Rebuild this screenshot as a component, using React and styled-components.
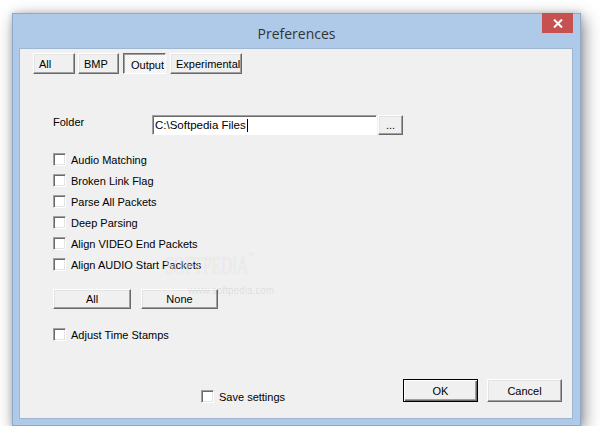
import React, { useState } from 'react'
import styled, { createGlobalStyle, css } from 'styled-components'

const GlobalStyle = createGlobalStyle`
  html, body {
    margin: 0;
    padding: 0;
    background: #ffffff;
  }
  body {
    font-family: "Liberation Sans", Arial, sans-serif;
    font-size: 11px;
    color: #000;
  }
`

const tabs = ['All', 'BMP', 'Output', 'Experimental']
const tabWidths = { All: 42, BMP: 41, Output: 43, Experimental: 72 }

const options = [
    'Audio Matching',
    'Broken Link Flag',
    'Parse All Packets',
    'Deep Parsing',
    'Align VIDEO End Packets',
    'Align AUDIO Start Packets',
]

const App = () => {
    const [tab, setTab] = useState('Output')
    const [checked, setChecked] = useState({})

    const toggle = name => setChecked({ ...checked, [name]: !checked[name] })

    return (
        <>
            <GlobalStyle />
            <Window>
                <TitleBar>
                    <span />
                    <Title>Preferences</Title>
                    <CloseButton aria-label="Close">
                        <svg width="10" height="9" viewBox="0 0 10 9">
                            <path d="M1 0.5 L9 8.5 M9 0.5 L1 8.5" stroke="#fff" strokeWidth="2" />
                        </svg>
                    </CloseButton>
                </TitleBar>
                <Client>
                    <TabRow>
                        {tabs.map(t => (
                            <Button
                                key={t}
                                $w={tabWidths[t]}
                                $h={21}
                                $left
                                $pressed={tab === t}
                                onClick={() => setTab(t)}
                            >
                                {t}
                            </Button>
                        ))}
                    </TabRow>

                    <FolderRow>
                        <FolderLabel>Folder</FolderLabel>
                        <TextBox>
                            C:\Softpedia Files<Caret />
                        </TextBox>
                        <Button $w={25} $h={20}>...</Button>
                    </FolderRow>

                    <CheckList>
                        {options.map(o => (
                            <CheckRow key={o} onClick={() => toggle(o)}>
                                <CheckBox $on={checked[o]} />
                                <span>{o}</span>
                            </CheckRow>
                        ))}
                    </CheckList>

                    <SelectRow>
                        <Button $w={78} $h={20}>All</Button>
                        <Button $w={77} $h={20}>None</Button>
                    </SelectRow>

                    <AdjustRow onClick={() => toggle('adjust')}>
                        <CheckBox $on={checked.adjust} />
                        <span>Adjust Time Stamps</span>
                    </AdjustRow>

                    <BottomBar>
                        <SaveRow onClick={() => toggle('save')}>
                            <CheckBox $on={checked.save} />
                            <span>Save settings</span>
                        </SaveRow>
                        <Button $w={75} $h={23} $default>OK</Button>
                        <Button $w={75} $h={23}>Cancel</Button>
                    </BottomBar>

                    <Watermark>
                        SOFTPEDIA<sup>™</sup>
                    </Watermark>
                    <WatermarkUrl>www.softpedia.com</WatermarkUrl>
                </Client>
            </Window>
        </>
    )
}

const Window = styled.div`
    margin: 13px 0 0 12px;
    width: 567px;
    height: 411px;
    border: 1px solid #8fa9c8;
    background: #aecae8;
    display: flex;
    flex-direction: column;
    box-shadow: 3px 5px 16px rgba(0, 0, 0, 0.45), 0 0 6px rgba(0, 0, 0, 0.15);
`

const TitleBar = styled.div`
    height: 34px;
    display: grid;
    grid-template-columns: 1fr auto 1fr;
    align-items: center;
`

const Title = styled.div`
    font-family: "Open Sans", "Noto Sans", sans-serif;
    font-size: 14px;
    color: #333;
    padding-top: 4px;
`

const CloseButton = styled.div`
    justify-self: end;
    align-self: start;
    margin-right: 7px;
    margin-top: -1px;
    width: 31px;
    height: 20px;
    background: #c75050;
    display: flex;
    align-items: center;
    justify-content: center;
`

const Client = styled.div`
    position: relative;
    margin: 0 7px 6px 6px;
    flex: 1;
    background: #f0f0f0;
    border: 1px solid #9db6d2;
    box-sizing: border-box;
    display: flex;
    flex-direction: column;
    padding: 4px 0 11px 0;
`

const Button = styled.button`
    box-sizing: border-box;
    flex: none;
    width: ${p => p.$w}px;
    height: ${p => p.$h}px;
    padding: 0;
    font-family: "Liberation Sans", Arial, sans-serif;
    font-size: 11px;
    color: #000;
    background: #f0f0f0;
    border: 1px solid;
    border-color: #fff #696969 #696969 #fff;
    box-shadow: inset -1px -1px #a0a0a0, inset 1px 1px #e3e3e3;
    cursor: pointer;
    ${p => p.$left && css`
        text-align: left;
        padding-left: 5px;
    `}
    ${p => p.$pressed && css`
        border-color: #696969 #fff #fff #696969;
        box-shadow: inset 1px 1px #a0a0a0;
        background: repeating-conic-gradient(#ffffff 0 25%, #ececec 0 50%) 0 0 / 2px 2px;
        padding-top: 2px;
        padding-left: 7px;
    `}
    ${p => p.$default && css`
        border: 1px solid #000;
        box-shadow: inset 1px 1px #fff, inset -1px -1px #696969, inset -2px -2px #a0a0a0;
    `}
`

const TabRow = styled.div`
    display: flex;
    gap: 3px;
    padding-left: 13px;
    & > button:nth-child(n + 3) {
        margin-left: 1px;
    }
`

const FolderRow = styled.div`
    display: flex;
    align-items: center;
    margin-top: 41px;
    padding-left: 33px;
`

const FolderLabel = styled.div`
    width: 99px;
    align-self: flex-start;
    margin-top: 1px;
`

const TextBox = styled.div`
    box-sizing: border-box;
    width: 225px;
    height: 20px;
    margin-right: 1px;
    background: #fff;
    border: 1px solid;
    border-color: #a0a0a0 #fff #fff #a0a0a0;
    box-shadow: inset 1px 1px #696969;
    padding: 0 2px;
    display: flex;
    align-items: center;
    font-size: 11.5px;
`

const Caret = styled.span`
    display: inline-block;
    width: 1px;
    height: 13px;
    background: #000;
    margin-left: 1px;
`

const CheckList = styled.div`
    display: flex;
    flex-direction: column;
    margin-top: 14px;
    padding-left: 33px;
`

const CheckRow = styled.label`
    display: flex;
    align-items: center;
    gap: 5px;
    height: 21px;
    white-space: nowrap;
    cursor: default;
    user-select: none;
`

const CheckBox = styled.span`
    box-sizing: border-box;
    width: 13px;
    height: 13px;
    flex: none;
    background: #fff;
    border: 1px solid;
    border-color: #a0a0a0 #fff #fff #a0a0a0;
    box-shadow: inset 1px 1px #696969, inset -1px -1px #e3e3e3;
    position: relative;
    ${p => p.$on && css`
        &::after {
            content: '';
            position: absolute;
            left: 3px;
            top: 0px;
            width: 3px;
            height: 6px;
            border: solid #000;
            border-width: 0 2px 2px 0;
            transform: rotate(40deg);
        }
    `}
`

const SelectRow = styled.div`
    display: flex;
    gap: 10px;
    margin-top: 14px;
    padding-left: 33px;
`

const AdjustRow = styled(CheckRow)`
    margin-top: 15px;
    padding-left: 33px;
`

const BottomBar = styled.div`
    margin-top: auto;
    display: flex;
    align-items: flex-start;
    padding: 0 10px 0 181px;
    gap: 9px;
`

const SaveRow = styled(CheckRow)`
    margin-top: 7px;
    margin-right: auto;
`

const Watermark = styled.div`
    position: absolute;
    left: 145px;
    top: 203px;
    font-family: "Liberation Serif", serif;
    font-size: 25px;
    transform: scaleX(0.62);
    transform-origin: left top;
    color: rgba(255, 255, 255, 0.55);
    text-shadow: 0 0 1px rgba(0, 0, 0, 0.12);
    pointer-events: none;
    sup {
        font-size: 9px;
        vertical-align: top;
        position: relative;
        top: -2px;
    }
`

const WatermarkUrl = styled.div`
    position: absolute;
    left: 168px;
    top: 236px;
    font-size: 10px;
    color: rgba(0, 0, 0, 0.1);
    pointer-events: none;
`

export default App
